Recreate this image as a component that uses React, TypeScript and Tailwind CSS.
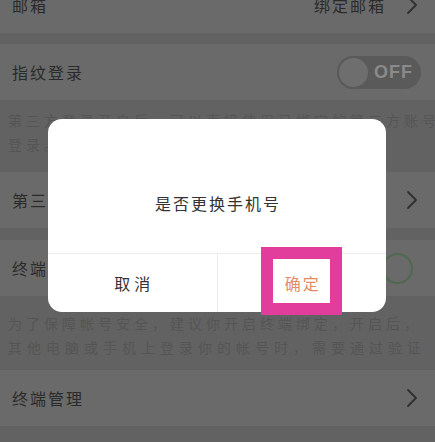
import React from "react";

const font = { fontFamily: '"Noto Sans CJK SC", "Noto Sans", sans-serif' };

function Chevron() {
  return (
    <svg width="12" height="20" viewBox="0 0 12 20" className="shrink-0">
      <polyline points="2,2 10,10 2,18" fill="none" stroke="#2f2f2f" strokeWidth="1.8" strokeLinecap="round" strokeLinejoin="round" />
    </svg>
  );
}

function Row({ title, children }: { title: string; children?: React.ReactNode }) {
  return (
    <div className="h-[56px] bg-[#6a6a6a] flex items-center justify-between pl-[12px] pr-[17px]">
      <span className="text-[16px] tracking-[2px] text-[#2a2a2a]">{title}</span>
      {children}
    </div>
  );
}

export default function App() {
  return (
    <div className="relative w-[435px] h-[442px] overflow-hidden bg-[#626262]" style={font}>
      <div className="flex flex-col mt-[-23px]">
        <Row title="邮箱">
          <div className="flex items-center gap-[20px]">
            <span className="text-[16px] tracking-[2px] text-[#2a2a2a]">绑定邮箱</span>
            <Chevron />
          </div>
        </Row>
        <div className="h-[11px]" />
        <Row title="指纹登录">
          <div className="relative w-[84px] h-[33px] rounded-full bg-[#5a5a5a] flex items-center mr-[-3px]">
            <div className="w-[33px] h-[33px] rounded-full bg-[#6e6e6e] border-[2px] border-[#5a5a5a]" />
            <span className="ml-[4px] text-[18px] font-bold text-[#8a8a8a] tracking-[1px]" style={{ fontFamily: '"Liberation Sans", sans-serif' }}>OFF</span>
          </div>
        </Row>
        <div className="h-[72px] pt-[8px] px-[8px] text-[14px] leading-[24px] tracking-[4px] text-[#555555] whitespace-nowrap">
          <div>第三方登录开启后，可以直接使用已绑定的第三方账号</div>
          <div>登录。</div>
        </div>
        <Row title="第三方账号管理">
          <Chevron />
        </Row>
        <div className="h-[12px]" />
        <Row title="终端绑定">
          <div className="w-[31px] h-[31px] rounded-full border-[2px] border-[#4d6a4f] bg-[#6a6a6a] mr-[5px]" />
        </Row>
        <div className="h-[74px] pt-[15px] px-[8px] text-[14px] leading-[24px] tracking-[4px] text-[#555555] whitespace-nowrap">
          <div>为了保障帐号安全，建议你开启终端绑定，开启后，</div>
          <div className="tracking-[5px]">其他电脑或手机上登录你的帐号时，需要通过验证</div>
        </div>
        <Row title="终端管理">
          <Chevron />
        </Row>
      </div>

      <div className="absolute left-[48px] top-[119px] w-[338px] h-[193px] bg-white rounded-[14px] flex flex-col">
        <div className="h-[134px] pt-[72px] flex justify-center">
          <span className="text-[16px] leading-[24px] tracking-[2px] text-[#333333] pl-[2px]">是否更换手机号</span>
        </div>
        <div className="h-px bg-[#ececec]" />
        <div className="flex-1 flex">
          <div className="flex-1 flex items-center justify-center border-r border-[#ececec]">
            <span className="text-[16px] tracking-[4px] text-[#333333] pl-[4px]">取消</span>
          </div>
          <div className="flex-1 flex items-center justify-center">
            <span className="text-[16px] tracking-[2px] text-[#e38b67] pl-[2px]">确定</span>
          </div>
        </div>
      </div>

      <div className="absolute left-[261px] top-[247px] w-[81px] h-[68px] border-[12px] border-[#e23c9d]" />
    </div>
  );
}
